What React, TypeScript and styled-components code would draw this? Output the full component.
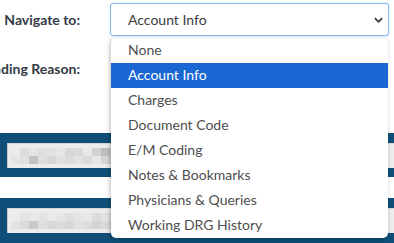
import styled, { createGlobalStyle } from "styled-components";

const options = [
  "None",
  "Account Info",
  "Charges",
  "Document Code",
  "E/M Coding",
  "Notes & Bookmarks",
  "Physicians & Queries",
  "Working DRG History",
];

// pixelated (redacted) field contents, two rows of grey cells
const mosaicRows = [
  ["#eaeaea", "#dcdcdc", "#e4e4e4", "#dedede", "#e2e2e2", "#e6e6e6", "#d8d8d8", "#dadada", "#e8e8e8", "#d2d2d2", "#bdbdbd", "#d6d6d6"],
  ["#e4e4e4", "#e0e0e0", "#c4c4c4", "#dedede", "#d6d6d6", "#e0e0e0", "#dcdcdc", "#e2e2e2", "#dadada", "#e6e6e6", "#d4d4d4", "#cfcfcf"],
];
const mosaicRows2 = [
  ["#ececec", "#e4e4e4", "#e8e8e8", "#e2e2e2", "#eaeaea", "#e6e6e6", "#e0e0e0", "#e4e4e4", "#e8e8e8", "#dcdcdc", "#e2e2e2", "#d8d8d8"],
  ["#e2e2e2", "#dadada", "#cacaca", "#dedede", "#d8d8d8", "#dcdcdc", "#d6d6d6", "#e0e0e0", "#dcdcdc", "#d4d4d4", "#dadada", "#d2d2d2"],
];

const App = () => {
  return (
    <>
      <GlobalStyle />
      <Page>
        <FormRow>
          <Label>Navigate to:</Label>
          <Select>
            <SelectText>Account Info</SelectText>
            <Chevron viewBox="0 0 10 6">
              <path d="M1 1l4 4 4-4" fill="none" stroke="#3a3a3a" strokeWidth="2" />
            </Chevron>
          </Select>
        </FormRow>
        <FormRow $height={34}>
          <Label>Pending Reason:</Label>
        </FormRow>
        <Spacer />
        <Band>
          <Field>
            <Mosaic>
              {mosaicRows.map((row, r) => (
                <MosaicRow key={r}>
                  {row.map((c, i) => (
                    <Cell key={i} style={{ background: c }} />
                  ))}
                </MosaicRow>
              ))}
            </Mosaic>
          </Field>
        </Band>
        <Gap />
        <Band $tall>
          <Field>
            <Mosaic>
              {mosaicRows2.map((row, r) => (
                <MosaicRow key={r}>
                  {row.map((c, i) => (
                    <Cell key={i} style={{ background: c }} />
                  ))}
                </MosaicRow>
              ))}
            </Mosaic>
          </Field>
        </Band>

        <Menu>
          {options.map((o) => (
            <Option key={o} $active={o === "Account Info"}>
              {o}
            </Option>
          ))}
        </Menu>
      </Page>
    </>
  );
};

export default App;

const GlobalStyle = createGlobalStyle`
  html, body {
    margin: 0;
    padding: 0;
    background: #ffffff;
    overflow: hidden;
  }
  body {
    font-family: Lato, "Open Sans", sans-serif;
  }
`;

const Page = styled.div`
  position: relative;
  width: 394px;
  height: 243px;
  overflow: hidden;
  display: flex;
  flex-direction: column;
  padding-top: 3px;
  box-sizing: border-box;
`;

const FormRow = styled.div<{ $height?: number }>`
  display: flex;
  align-items: center;
  gap: 30px;
  height: ${(p) => (p.$height ? `${p.$height}px` : "33px")};
  margin-bottom: ${(p) => (p.$height ? "0" : "16px")};
`;

const Label = styled.div`
  width: 80px;
  flex-shrink: 0;
  display: flex;
  justify-content: flex-end;
  white-space: nowrap;
  font-size: 14px;
  font-weight: 700;
  color: #333a44;
`;

const Select = styled.div`
  width: 279px;
  height: 33px;
  box-sizing: border-box;
  border: 1px solid #86b5e8;
  border-radius: 3px;
  box-shadow: 0 0 2px rgba(80, 140, 220, 0.35);
  display: flex;
  align-items: center;
  justify-content: space-between;
  padding: 0 5px 0 17px;
  background: #fff;
`;

const SelectText = styled.span`
  font-size: 14px;
  color: #3d3d3d;
`;

const Chevron = styled.svg`
  width: 9px;
  height: 6px;
`;

const Spacer = styled.div`
  height: 50px;
`;

const Band = styled.div<{ $tall?: boolean }>`
  background: #0e4e78;
  padding: 10px 0 ${(p) => (p.$tall ? "10px" : "9px")} 7px;
`;

const Field = styled.div`
  height: 25px;
  background: #ececec;
  border-left: 1px solid #c8c8c8;
  border-top: 1px solid #d8d8d8;
  box-sizing: border-box;
  display: flex;
  align-items: center;
  padding-left: 3px;
`;

const Mosaic = styled.div`
  display: flex;
  flex-direction: column;
`;

const MosaicRow = styled.div`
  display: flex;
`;

const Cell = styled.div`
  width: 9px;
  height: 8px;
`;

const Gap = styled.div`
  height: 22px;
`;

const Menu = styled.div`
  position: absolute;
  top: 38px;
  left: 111px;
  width: 277px;
  background: #fff;
  border-radius: 5px;
  box-shadow: -1px 1px 4px rgba(0, 0, 0, 0.28);
  overflow: hidden;
  display: flex;
  flex-direction: column;
`;

const Option = styled.div<{ $active?: boolean }>`
  height: 25px;
  line-height: 23px;
  padding-left: 17px;
  font-size: 14px;
  color: ${(p) => (p.$active ? "#ffffff" : "#4e4e4e")};
  background: ${(p) => (p.$active ? "#1a66d2" : "transparent")};
`;
